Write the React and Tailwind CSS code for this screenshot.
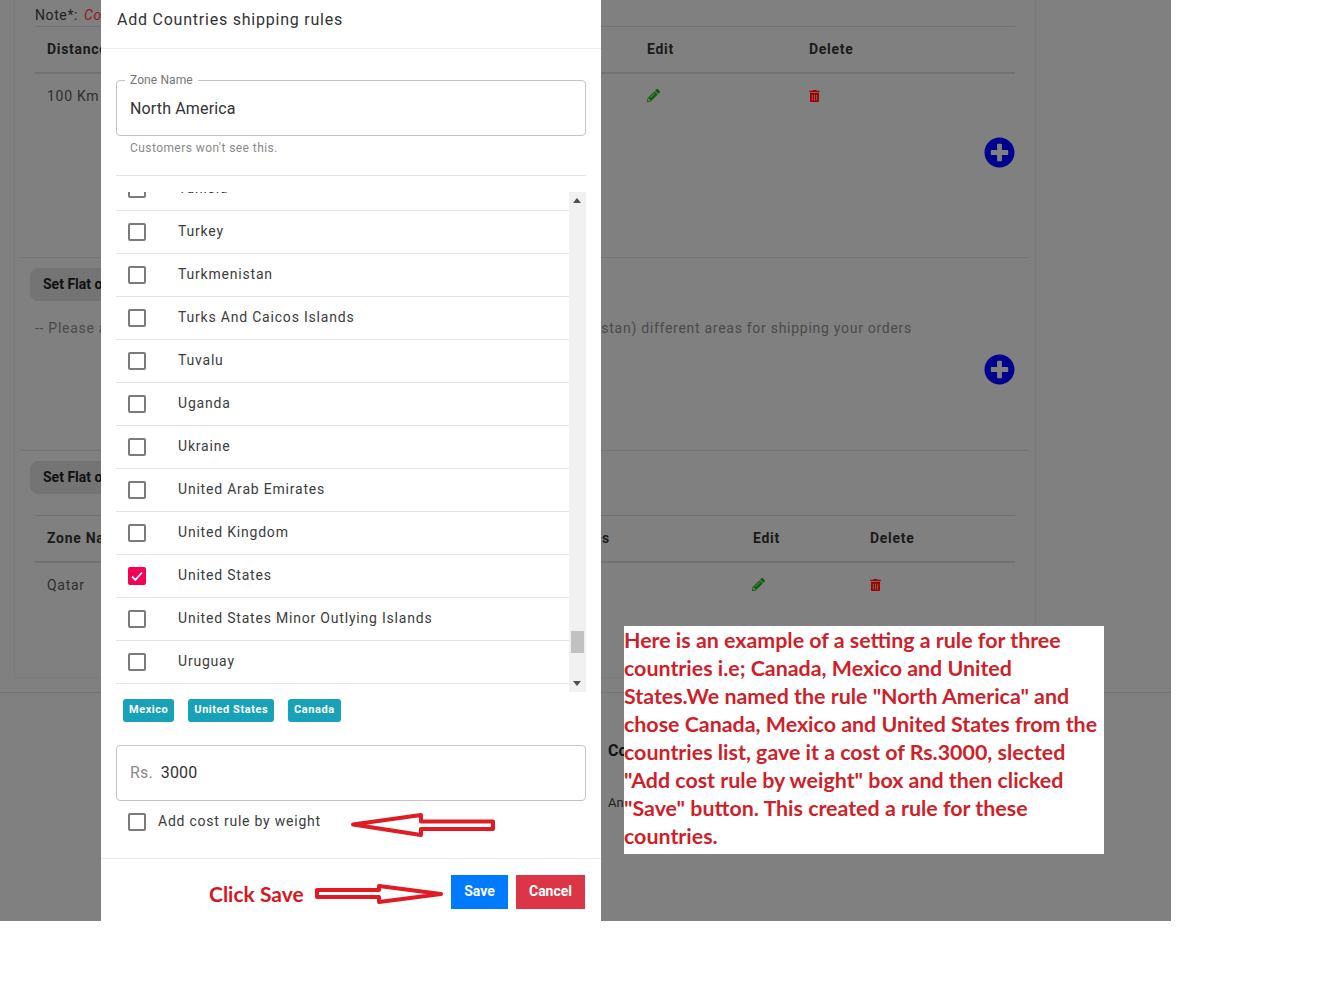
import { FaPencilAlt, FaPlusCircle, FaTrashAlt } from "react-icons/fa";

const countries = [
  "Tunisia",
  "Turkey",
  "Turkmenistan",
  "Turks And Caicos Islands",
  "Tuvalu",
  "Uganda",
  "Ukraine",
  "United Arab Emirates",
  "United Kingdom",
  "United States",
  "United States Minor Outlying Islands",
  "Uruguay",
];

const noteLines = [
  "Here is an example of a setting a rule for three",
  "countries i.e; Canada, Mexico and United",
  'States.We named the rule "North America" and',
  "chose Canada, Mexico and United States from the",
  "countries list, gave it a cost of Rs.3000, slected",
  '"Add cost rule by weight" box and then clicked',
  '"Save" button. This created a rule for these',
  "countries.",
];

function Checkbox({ checked }) {
  if (checked) {
    return (
      <span className="flex h-[18px] w-[18px] shrink-0 items-center justify-center rounded-[2px] bg-[#f50057]">
        <svg viewBox="0 0 18 18" className="h-[18px] w-[18px]" fill="none" stroke="white" strokeWidth="1.8">
          <path d="M4 9.5l3.4 3.4L14 5.5" />
        </svg>
      </span>
    );
  }
  return <span className="block h-[18px] w-[18px] shrink-0 rounded-[2px] border-2 border-[#7b7b7b]" />;
}

function Chip({ children }) {
  return (
    <span className="flex h-[23px] items-center rounded-[3px] bg-[#17a2b8] px-[6px] pb-[1px] text-[11px] font-bold tracking-[0.55px] text-white">
      {children}
    </span>
  );
}

function AddButton() {
  return (
    <div className="flex justify-end">
      <FaPlusCircle className="h-[31px] w-[31px] text-[#00008f]" />
    </div>
  );
}

function FlatChip() {
  return (
    <div className="flex h-[33px] w-[120px] items-center rounded-lg bg-[#747474] pl-[13px] text-[14px] font-bold text-[#101010]">
      Set Flat on
    </div>
  );
}

export default function App() {
  return (
    <div className="relative h-[1000px] w-[1340px] overflow-hidden bg-white font-[Roboto,sans-serif]">
      {/* dimmed page behind the dialog */}
      <div className="h-[921px] w-[1171px] bg-[#808080]">
        <div className="ml-[14px] h-[678px] w-[1022px] rounded-b border-x border-b border-x-[#7a7a7a] border-b-[#747a86] px-[6px]">
          <section className="h-[258px] border-b border-[#747474] px-[14px]">
            <div className="h-[26px] pt-[5px] text-[14px] leading-[20px] tracking-[0.6px] text-[#222]">
              Note*: <span className="ml-[2px] italic text-[#8b1a1a]">Cost</span>
            </div>
            <div className="flex h-[48px] items-center border-y border-b-2 border-y-[#727272] pl-[12px] text-[14px] font-bold tracking-[0.7px] text-[#1a1a1a]">
              <span className="w-[600px]">Distance</span>
              <span className="w-[162px]">Edit</span>
              <span>Delete</span>
            </div>
            <div className="flex h-[45px] items-center pl-[12px] text-[14px] tracking-[0.7px] text-[#2e2e2e]">
              <span className="w-[600px]">100 Km</span>
              <span className="-mt-[2px] w-[162px]">
                <FaPencilAlt className="h-[13px] w-[13px] text-[#0f5f0f]" />
              </span>
              <FaTrashAlt className="-mt-[2px] h-[12px] w-[11px] text-[#a00000]" />
            </div>
            <div className="pt-[18px]">
              <AddButton />
            </div>
          </section>

          <section className="h-[193px] border-b border-[#747474] px-[9px] pt-[10px]">
            <FlatChip />
            <div className="ml-[5px] mt-[17px] flex w-[877px] justify-between whitespace-nowrap text-[14px] leading-[20px] tracking-[0.72px] text-[#4a4a4a]">
              <span>-- Please add</span>
              <span>stan) different areas for shipping your orders</span>
            </div>
            <div className="mr-[5px] mt-[16px]">
              <AddButton />
            </div>
          </section>

          <section className="px-[9px] pt-[10px]">
            <FlatChip />
            <div className="ml-[5px] mt-[21px] flex h-[48px] w-[980px] items-center border-y border-b-2 border-y-[#727272] pl-[12px] text-[14px] font-bold tracking-[0.7px] text-[#1a1a1a]">
              <span className="w-[453px]">Zone Name</span>
              <span className="w-[110px] text-right">Countries</span>
              <span className="ml-[143px] w-[117px]">Edit</span>
              <span>Delete</span>
            </div>
            <div className="ml-[5px] flex h-[45px] items-center pl-[12px] text-[14px] tracking-[0.7px] text-[#2e2e2e]">
              <span className="w-[705px]">Qatar</span>
              <span className="-mt-[2px] w-[118px]">
                <FaPencilAlt className="h-[13px] w-[13px] text-[#0f5f0f]" />
              </span>
              <FaTrashAlt className="-mt-[2px] h-[12px] w-[11px] text-[#a00000]" />
            </div>
          </section>
        </div>

        <div className="mt-[14px] border-t border-[#747474] pl-[608px]">
          <div className="mt-[48px] text-[16px] font-bold leading-[20px] text-[#111]">Contact</div>
          <div className="mt-[32px] text-[13px] leading-[20px] text-[#222]">Any</div>
        </div>
      </div>

      {/* dialog */}
      <div className="absolute left-[101px] top-0 flex h-[921px] w-[500px] flex-col bg-white">
        <div className="h-[49px] border-b border-[#e9ecef] pl-[16px] pt-[10px] text-[16px] leading-[20px] tracking-[0.77px] text-[#333]">
          Add Countries shipping rules
        </div>

        <div className="flex-1 px-[15px]">
          <fieldset className="mt-[24px] h-[63px] rounded-[4px] border border-[#c4c4c4] pl-[8px] pr-[13px]">
            <legend className="px-[5px] text-[12px] leading-[14px] tracking-[0.1px] text-[#777]">Zone Name</legend>
            <div className="pl-[5px] pt-[10px] text-[16px] leading-[24px] tracking-[0.15px] text-[#333]">North America</div>
          </fieldset>
          <div className="pl-[14px] pt-[3px] text-[12px] leading-[18px] tracking-[0.43px] text-[#8a8a8a]">
            Customers won't see this.
          </div>
          <div className="mt-[18px] border-b border-[#e4e4e4]" />

          <div className="mt-[16px] flex h-[500px]">
            <div className="flex-1 overflow-hidden">
              <div className="-mt-[24px]">
                {countries.map((name) => (
                  <div key={name} className="flex h-[43px] items-center border-b border-[#e4e4e4] pl-[12px] pb-[2px] text-[14px] tracking-[0.8px] text-[#3c3c3c]">
                    <span className="mt-[2px]">
                      <Checkbox checked={name === "United States"} />
                    </span>
                    <span className="ml-[32px]">{name}</span>
                  </div>
                ))}
              </div>
            </div>
            <div className="flex w-[17px] flex-col items-center bg-[#f1f1f1]">
              <svg viewBox="0 0 8 5" className="-ml-px mt-[6px] h-[5px] w-[8px] fill-[#505050]">
                <path d="M4 0l4 5H0z" />
              </svg>
              <div className="mt-[428px] h-[22px] w-[13px] bg-[#c1c1c1]" />
              <svg viewBox="0 0 8 5" className="-ml-px mt-[28px] h-[5px] w-[8px] fill-[#505050]">
                <path d="M0 0h8L4 5z" />
              </svg>
            </div>
          </div>

          <div className="flex pl-[7px] pt-[7px]">
            <Chip>Mexico</Chip>
            <div className="w-[14px]" />
            <Chip>United States</Chip>
            <div className="w-[14px]" />
            <Chip>Canada</Chip>
          </div>

          <div className="mt-[23px] flex h-[56px] items-center rounded-[4px] border border-[#c4c4c4] pl-[13px] pb-[1px] text-[16px] tracking-[0.15px]">
            <span className="text-[#8a8a8a]">Rs.</span>
            <span className="ml-[8px] text-[#333]">3000</span>
          </div>

          <div className="flex items-start pl-[12px]">
            <span className="mt-[12px]">
              <Checkbox />
            </span>
            <span className="ml-[12px] mt-[10px] w-[194px] text-[14px] leading-[20px] tracking-[0.77px] text-[#3c3c3c]">Add cost rule by weight</span>
            <svg viewBox="0 0 146 26" className="-ml-[2px] mt-[11px] h-[26px] w-[146px]" fill="white" stroke="#e01b24" strokeWidth="4" strokeLinejoin="round">
              <path d="M3 12.5L71 3v6.5h72V17H71v6z" />
            </svg>
          </div>
        </div>

        <div className="flex h-[63px] items-start border-t border-[#e9ecef] pl-[108px] pt-[16px]">
          <span className="mt-[4px] w-[106px] font-[Lato,sans-serif] text-[21px] font-bold leading-[30px] text-[#d8161f]">Click Save</span>
          <svg viewBox="0 0 130 22" className="mt-[7px] h-[22px] w-[130px]" fill="white" stroke="#e01b24" strokeWidth="4" strokeLinejoin="round">
            <path d="M2 8h62V4l62 8-62 8v-5H2z" />
          </svg>
          <button className="ml-[6px] h-[34px] w-[57px] bg-[#007bff] pb-[2px] text-[14px] font-bold text-white">Save</button>
          <button className="ml-[8px] h-[34px] w-[69px] bg-[#dc3545] pb-[2px] text-[14px] font-bold text-white">Cancel</button>
        </div>
      </div>

      {/* annotation pasted over the screenshot */}
      <div className="absolute left-[624px] top-[626px] h-[228px] w-[480px] bg-white font-[Lato,sans-serif] text-[21.4px] font-bold leading-[28px] text-[#cf1f2b]">
        {noteLines.map((line) => (
          <div key={line} className="whitespace-nowrap">{line}</div>
        ))}
      </div>
    </div>
  );
}
